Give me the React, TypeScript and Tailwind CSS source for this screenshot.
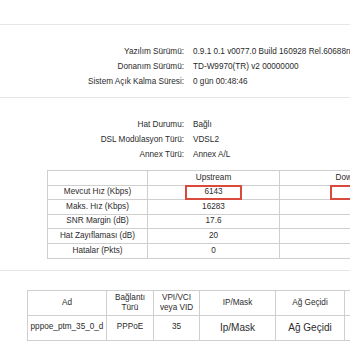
import React from "react";

const font = { fontFamily: '"Liberation Sans", Arial, sans-serif' };

function InfoRow({ label, value }: { label: string; value: string }) {
  return (
    <div className="flex h-[15px] items-center whitespace-nowrap">
      <div className="w-[184px] shrink-0 text-right">{label}</div>
      <div className="pl-[9px] shrink-0">{value}</div>
    </div>
  );
}

function RedBox({ children }: { children?: React.ReactNode }) {
  return (
    <div className="flex h-[15px] w-[57px] items-center justify-center border-2 border-[#d9493c]">
      {children}
    </div>
  );
}

const rows1: [string, React.ReactNode, React.ReactNode][] = [
  ["", "Upstream", "Downstream"],
  ["Mevcut Hız (Kbps)", <RedBox>6143</RedBox>, <RedBox />],
  ["Maks. Hız (Kbps)", "16283", ""],
  ["SNR Margin (dB)", "17.6", ""],
  ["Hat Zayıflaması (dB)", "20", ""],
  ["Hatalar (Pkts)", "0", ""],
];

export default function App() {
  return (
    <div
      className="relative h-[350px] w-[350px] overflow-hidden bg-white text-[8.2px] text-[#2b2b2b]"
      style={font}
    >
      <div className="h-[24px]" />
      <div className="w-[600px] border-t border-[#e6e6e6] pt-[20px] pb-[7px]">
        <InfoRow label="Yazılım Sürümü:" value="0.9.1 0.1 v0077.0 Build 160928 Rel.60688n" />
        <InfoRow label="Donanım Sürümü:" value="TD-W9970(TR) v2 00000000" />
        <InfoRow label="Sistem Açık Kalma Süresi:" value="0 gün 00:48:46" />
      </div>
      <div className="w-[600px] border-t border-[#e6e6e6] pt-[20px] pb-[11px]">
        <InfoRow label="Hat Durumu:" value="Bağlı" />
        <InfoRow label="DSL Modülasyon Türü:" value="VDSL2" />
        <InfoRow label="Annex Türü:" value="Annex A/L" />
        <div className="ml-[47px] mt-[7px] w-max border-l border-t border-[#cfcfcf]">
          {rows1.map((r, i) => (
            <div key={i} className="flex h-[14.6px]">
              <div className="flex w-[100px] items-center justify-center border-b border-r border-[#cfcfcf]">
                {r[0]}
              </div>
              <div className="flex w-[132px] items-center justify-center border-b border-r border-[#cfcfcf]">
                {r[1]}
              </div>
              <div className="flex w-[158px] items-center justify-center border-b border-r border-[#cfcfcf]">
                {r[2]}
              </div>
            </div>
          ))}
        </div>
      </div>
      <div className="w-[600px] border-t border-[#e6e6e6] pt-[19px]">
        <div className="ml-[27px] w-max border-l border-t border-[#cfcfcf]">
          <div className="flex h-[25px] leading-[10px]">
            <div className="flex w-[79px] items-center justify-center border-b border-r border-[#cfcfcf] text-center">Ad</div>
            <div className="flex w-[47px] items-center justify-center border-b border-r border-[#cfcfcf] text-center">
              Bağlantı
              <br />
              Türü
            </div>
            <div className="flex w-[46px] items-center justify-center border-b border-r border-[#cfcfcf] text-center">
              VPI/VCI
              <br />
              veya VID
            </div>
            <div className="flex w-[76px] items-center justify-center border-b border-r border-[#cfcfcf]">IP/Mask</div>
            <div className="flex w-[69px] items-center justify-center border-b border-r border-[#cfcfcf]">Ağ Geçidi</div>
            <div className="w-[70px] border-b border-r border-[#cfcfcf]" />
          </div>
          <div className="flex h-[25px]">
            <div className="flex w-[79px] items-center justify-center border-b border-r border-[#cfcfcf]">pppoe_ptm_35_0_d</div>
            <div className="flex w-[47px] items-center justify-center border-b border-r border-[#cfcfcf]">PPPoE</div>
            <div className="flex w-[46px] items-center justify-center border-b border-r border-[#cfcfcf]">35</div>
            <div className="flex w-[76px] items-center justify-center border-b border-r border-[#cfcfcf] text-[10px]">Ip/Mask</div>
            <div className="flex w-[69px] items-center justify-center border-b border-r border-[#cfcfcf] text-[10px]">Ağ Geçidi</div>
            <div className="w-[70px] border-b border-r border-[#cfcfcf]" />
          </div>
        </div>
      </div>
    </div>
  );
}
